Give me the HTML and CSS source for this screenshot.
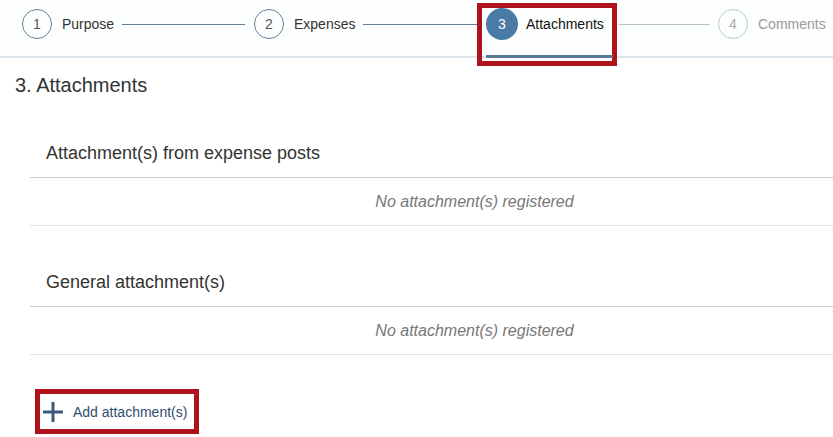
FILE: index.html
```html
<!DOCTYPE html>
<html lang="en">
<head>
    <meta charset="UTF-8">
    <title>Attachments</title>
    <link rel="stylesheet" href="styles.css">
</head>
<body>
    <div class="stepper">
        <div class="step done">
            <span class="step-num">1</span>
            <span class="step-label">Purpose</span>
            <span class="step-line"></span>
        </div>
        <div class="step done">
            <span class="step-num">2</span>
            <span class="step-label">Expenses</span>
            <span class="step-line"></span>
        </div>
        <div class="step active">
            <div class="step-head">
                <span class="step-num">3</span>
                <span class="step-label">Attachments</span>
            </div>
            <span class="step-line"></span>
        </div>
        <div class="step todo">
            <span class="step-num">4</span>
            <span class="step-label">Comments</span>
        </div>
    </div>

    <h2 class="page-title">3. Attachments</h2>

    <div class="att-section">
        <div class="att-title">Attachment(s) from expense posts</div>
        <div class="att-empty">No attachment(s) registered</div>
    </div>

    <div class="att-section">
        <div class="att-title">General attachment(s)</div>
        <div class="att-empty">No attachment(s) registered</div>
    </div>

    <button class="add-btn" type="button">
        <svg width="22" height="22" viewBox="0 0 22 22"><path d="M11 1v20M1 11h20" stroke="#3d5b7a" stroke-width="3"/></svg>
        <span>Add attachment(s)</span>
    </button>
</body>
</html>
```

FILE: styles.css
```css
body { margin: 0; font-family: "Liberation Sans", Arial, sans-serif; color: #333; background: #fff; overflow: hidden; }

.stepper { display: grid; grid-template-columns: repeat(3, 232px) 1fr; height: 56px; padding-left: 22px; border-bottom: 2px solid #dbe4ea; background: #fdfefe; }
.step { display: flex; align-items: flex-start; padding-top: 9px; font-size: 14px; position: relative; min-width: 0; }
.step-num { width: 30px; height: 30px; box-sizing: border-box; border: 1px solid #5f7f98; border-radius: 50%; display: flex; align-items: center; justify-content: center; color: #555; flex: none; }
.step-label { margin-left: 10px; line-height: 30px; white-space: nowrap; }
.step-line { flex: 1; height: 1px; background: #5f7f98; margin: 15px 9px 0 8px; }

.step.active { padding-top: 8px; }
.step-head { display: flex; align-items: flex-start; padding-right: 9px; height: 48px; position: relative; }
.step-head::after { content: ""; position: absolute; left: 0; right: 0; bottom: -2px; height: 3px; background: #5b7a95; }
.step-head::before { content: ""; position: absolute; left: -9px; right: -4px; top: -5px; bottom: -10px; border: 5px solid #b0121b; }
.step.active .step-num { width: 32px; height: 32px; border: none; background: #4a7ba6; color: #fff; }
.step.active .step-label { line-height: 32px; margin-left: 8px; color: #111; }
.step.active .step-line { background: #b6c3cc; margin: 16px 8px 0 6px; }

.step.todo .step-num { border-color: #b9c8d2; color: #aaa; }
.step.todo .step-label { color: #999; }

.page-title { margin: 15px 0 0 15px; font-size: 20px; font-weight: normal; line-height: 24px; color: #333; }

.att-section { margin: 24px 0 0 30px; }
.att-title { padding: 20px 16px 12px; font-size: 18px; line-height: 24px; color: #333; border-bottom: 1px solid #cacaca; }
.att-empty { padding: 12px 0 12px 86px; line-height: 23px; font-size: 16px; font-style: italic; color: #777; text-align: center; border-bottom: 1px solid #e2e2e2; }

.add-btn { display: flex; align-items: center; gap: 9px; margin: 34px 0 0 35px; width: 164px; height: 45px; box-sizing: border-box; padding: 0 0 0 2px; border: 5px solid #b0121b; background: #fff; font-family: inherit; font-size: 14px; color: #2f4e6e; cursor: pointer; }
```
